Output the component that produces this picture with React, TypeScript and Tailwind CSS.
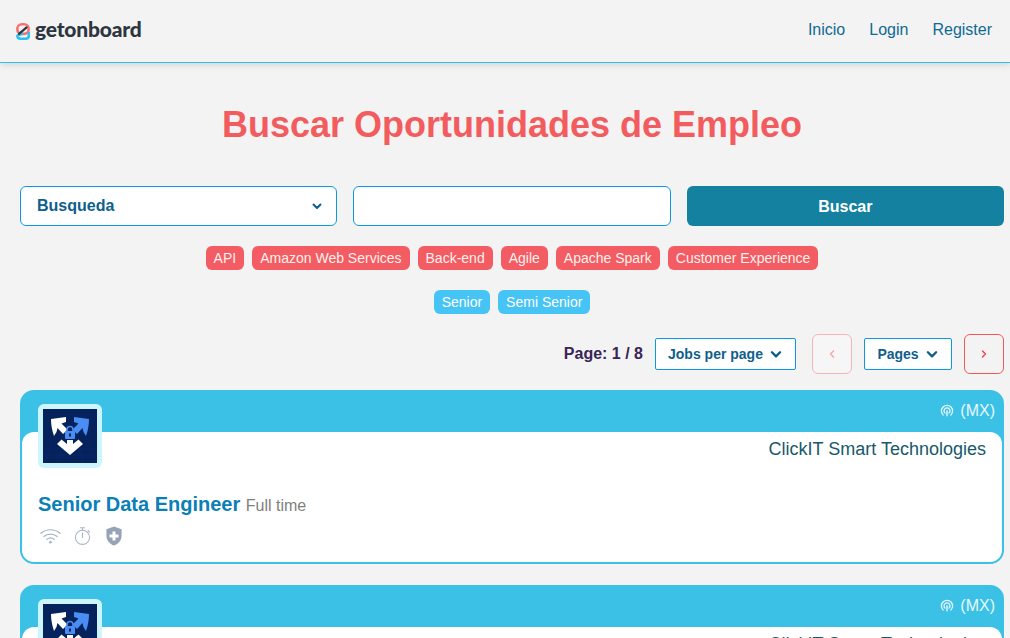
import React from "react";

function ChevronDown({ className }: { className: string }) {
  return (
    <svg viewBox="0 0 12 12" className={className} fill="none" stroke="currentColor" strokeWidth="2" strokeLinecap="round" strokeLinejoin="round">
      <path d="M2.5 4.5 6 8l3.5-3.5" />
    </svg>
  );
}

function Logo() {
  return (
    <svg viewBox="0 0 14 17" className="w-[14px] h-[17px] shrink-0 mt-[5px]">
      <rect x="1.3" y="1.3" width="11.4" height="9.6" rx="4.6" fill="none" stroke="#f9706f" strokeWidth="2.6" />
      <path d="M7 10.2 1.4 12.8C1.4 14.6 2.6 15.7 4.4 15.7H9.8C11.6 15.7 12.8 14.4 12.8 12.8V9" fill="none" stroke="#2cc0ee" strokeWidth="2.6" strokeLinejoin="round" />
      <path d="M3 10.8 10.6 4.4" stroke="#2d3640" strokeWidth="2.2" strokeLinecap="round" />
    </svg>
  );
}

function CompanyLogo() {
  return (
    <div className="w-16 h-16 shrink-0 rounded-md bg-[#cdf5fd] p-[5px]">
      <svg viewBox="0 0 54 54" className="w-full h-full block">
        <rect width="54" height="54" fill="#05225c" />
        <path d="M0 40 54 40M0 46 54 46M8 34 2 54M20 34 14 54M34 34 40 54M46 34 52 54" stroke="#0c2f70" strokeWidth="0.5" />
        <path d="M8 10 23 8V13L18.5 14.5 24.5 20.5 20 25 14.5 19 13.5 23 11 27C9 21 8 16 8 10Z" fill="#ffffff" />
        <path d="M46 10 31 8V13L35.5 14.5 29.5 20.5 34 25 39.5 19 40.5 23 43 27C45 21 46 16 46 10Z" fill="#4a8df5" />
        <path d="M14 35 18.5 30.5 24 35V31H30V35L35.5 30.5 40 35 27 46Z" fill="#ffffff" />
        <path d="M24 22V20.5A3 3 0 0 1 30 20.5V22" fill="none" stroke="#4a8df5" strokeWidth="1.6" />
        <rect x="22" y="22" width="10" height="8" rx="1" fill="#4a8df5" />
        <rect x="26" y="24.5" width="2" height="3" fill="#05225c" />
      </svg>
    </div>
  );
}

function JobCard() {
  return (
    <div className="relative shrink-0 h-[174px] rounded-[14px] border-2 border-[#3bc0e6] bg-[#3bc0e6] overflow-hidden">
      <div className="flex justify-end items-center h-10 pr-[7px] pb-[2px] text-[#e6f8fd] text-base">
        <svg viewBox="0 0 16 16" className="w-[14px] h-[14px] mr-[6px]" fill="none" stroke="currentColor" strokeWidth="1.5" strokeLinecap="round">
          <path d="M3.6 12.6a6.4 6.4 0 1 1 8.8 0" />
          <path d="M5.7 10.4a3.4 3.4 0 1 1 4.6 0" />
          <circle cx="8" cy="8" r="1" fill="currentColor" stroke="none" />
          <path d="M8 9v4.5" strokeWidth="1.6" />
        </svg>
        <span>(MX)</span>
      </div>
      <div className="h-[130px] rounded-t-xl bg-white px-4">
        <div className="flex justify-end pt-[5px] text-lg leading-[24px] text-[#17596b]">ClickIT Smart Technologies</div>
        <div className="mt-[28px] flex items-baseline gap-[5.5px]">
          <span className="text-xl leading-[30px] font-bold text-[#0a7fb8]">Senior Data Engineer</span>
          <span className="text-base text-[#7f7f7f]">Full time</span>
        </div>
        <div className="mt-[7px] h-5 flex items-center pl-[2px] text-[#a9b5c6]">
          <svg viewBox="0 0 22 16" className="w-[21px] h-[16px]" fill="none" stroke="currentColor" strokeWidth="1.3" strokeLinecap="round">
            <path d="M1 5.2C6.5.2 15.5.2 21 5.2" />
            <path d="M4 8.5C8 5.2 14 5.2 18 8.5" />
            <path d="M7.2 11.5C9.5 9.7 12.5 9.7 14.8 11.5" />
            <circle cx="11" cy="14.5" r="1.4" fill="currentColor" stroke="none" />
          </svg>
          <svg viewBox="0 0 17 18" className="ml-[13px] w-[17px] h-[18px]" fill="none" stroke="currentColor" strokeWidth="1.1" strokeLinecap="round">
            <circle cx="8.5" cy="10.3" r="7.1" />
            <path d="M6.5.8h4M8.5.8v2.4M14 3.6l1.4 1.4M8.5 6v4.5" />
          </svg>
          <svg viewBox="0 0 16 20" className="ml-[15px] w-4 h-5">
            <path d="M8 .6 15.6 3.2V9.5C15.6 14.5 12.2 18 8 19.6 3.8 18 .4 14.5.4 9.5V3.2Z" fill="#96a3b5" />
            <path d="M6.5 5.5h3v3h3v3h-3v3h-3v-3h-3v-3h3Z" fill="#ffffff" />
          </svg>
        </div>
      </div>
    </div>
  );
}

function CardWrap() {
  return (
    <div className="relative">
      <JobCard />
      <div className="absolute left-[18px] top-[14px]">
        <CompanyLogo />
      </div>
    </div>
  );
}

const skills = ["API", "Amazon Web Services", "Back-end", "Agile", "Apache Spark", "Customer Experience"];
const levels = ["Senior", "Semi Senior"];

export default function App() {
  return (
    <div className="h-[638px] overflow-hidden bg-[#f3f3f3] font-['Liberation_Sans',sans-serif]">
      <header className="h-[63px] flex items-center justify-between border-b border-[#2cc0ee] pl-4 pr-[18px] shadow-[0_2px_6px_rgba(0,0,0,0.12)]">
        <div className="flex items-center gap-[5px] -mt-[5px]">
          <Logo />
          <span className="font-['Lato',sans-serif] font-black text-[21px] leading-none tracking-[-0.2px] text-[#2d3640]">getonboard</span>
        </div>
        <nav className="flex gap-6 text-base text-[#0f6a94] -mt-[3px]">
          <span>Inicio</span>
          <span>Login</span>
          <span>Register</span>
        </nav>
      </header>

      <main className="pl-5 pr-1.5">
        <h1 className="mt-[38px] text-center text-4xl leading-[48px] font-bold text-[#f25c5f]">Buscar Oportunidades de Empleo</h1>

        <div className="mt-[37px] grid grid-cols-3 gap-4">
          <div className="h-10 flex items-center justify-between rounded-md border border-[#0c9ade] bg-white pl-4 pr-[13px] font-bold text-base text-[#0f5f8c]">
            <span>Busqueda</span>
            <ChevronDown className="w-3 h-3" />
          </div>
          <div className="h-10 rounded-md border border-[#0c9ade] bg-white" />
          <button className="h-10 rounded-md bg-[#1481a0] pt-px text-white font-bold text-base">Buscar</button>
        </div>

        <div className="mt-5 flex justify-center gap-2">
          {skills.map((s) => (
            <span key={s} className="h-6 flex items-center rounded-md bg-[#f25c62] px-2 text-sm text-[#fff0ee]">{s}</span>
          ))}
        </div>
        <div className="mt-5 flex justify-center gap-2">
          {levels.map((s) => (
            <span key={s} className="h-6 flex items-center rounded-md bg-[#45c4f5] px-2 text-sm text-white">{s}</span>
          ))}
        </div>

        <div className="mt-5 flex items-center justify-end">
          <span className="mr-3 font-bold text-base text-[#3a2457]">Page: 1 / 8</span>
          <div className="h-8 w-[141px] flex items-center justify-center gap-[6px] rounded-[2px] border border-[#0c9ade] bg-white text-sm font-bold text-[#0f5f8c]">
            Jobs per page
            <ChevronDown className="w-[14px] h-[14px]" />
          </div>
          <div className="ml-4 h-10 w-10 flex items-center justify-center rounded-md border border-[#f8b4b4] bg-[#f6f6f6] text-[#f8a0a0]">
            <svg viewBox="0 0 10 10" className="w-2.5 h-2.5" fill="none" stroke="currentColor" strokeWidth="1.4" strokeLinecap="round" strokeLinejoin="round"><path d="M6.5 2 3.5 5l3 3" /></svg>
          </div>
          <div className="ml-3 h-8 w-[88px] flex items-center justify-center gap-[6px] rounded-[2px] border border-[#0c9ade] bg-white text-sm font-bold text-[#0f5f8c]">
            Pages
            <ChevronDown className="w-[14px] h-[14px]" />
          </div>
          <div className="ml-3 h-10 w-10 flex items-center justify-center rounded-md border border-[#f0575c] text-[#ee3f46]">
            <svg viewBox="0 0 10 10" className="w-2.5 h-2.5" fill="none" stroke="currentColor" strokeWidth="1.4" strokeLinecap="round" strokeLinejoin="round"><path d="M3.5 2 6.5 5l-3 3" /></svg>
          </div>
        </div>

        <div className="mt-4 flex flex-col gap-[21px]">
          <CardWrap />
          <CardWrap />
        </div>
      </main>
    </div>
  );
}
